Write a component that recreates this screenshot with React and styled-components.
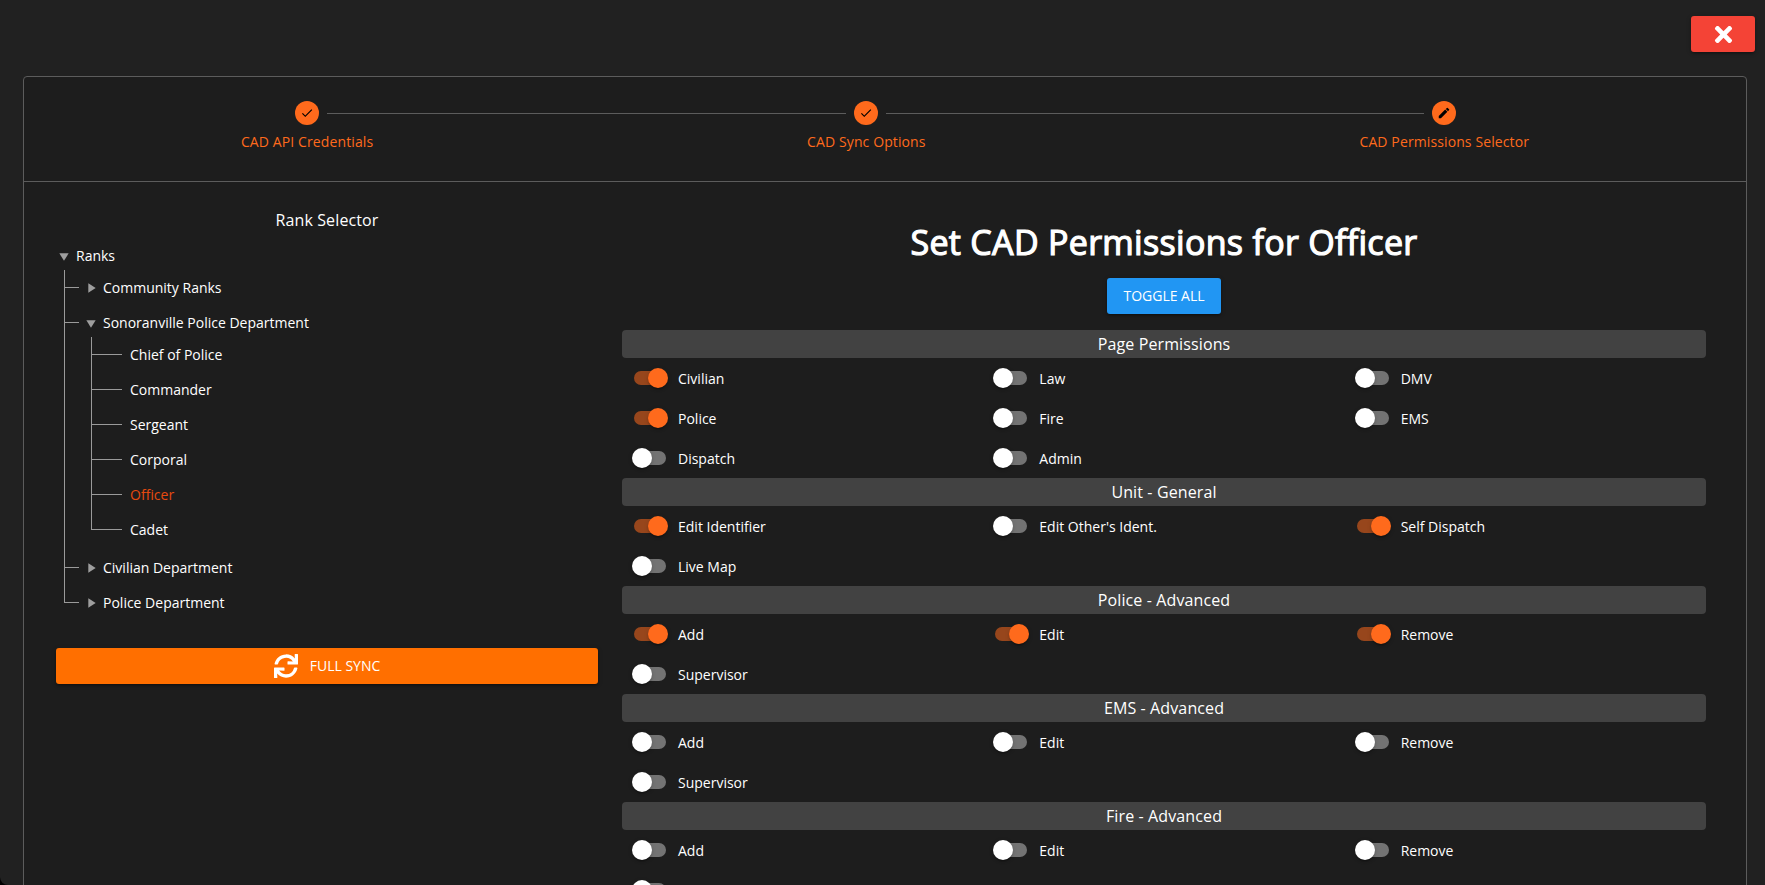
import React from 'react';
import styled, { createGlobalStyle, css } from 'styled-components';
import { MdCheck, MdEdit, MdPlayArrow } from 'react-icons/md';
import { FaTimes, FaSync } from 'react-icons/fa';

const GlobalStyle = createGlobalStyle`
  * { box-sizing: border-box; }
  html, body { margin: 0; height: 100%; overflow: hidden; background: #000; }
  body { color: #fff; font: 400 14px/19px "Open Sans", "Noto Sans", sans-serif; }
  button { font: inherit; }
`;

const Page = styled.div`
  display: flex;
  flex-direction: column;
  height: 885px;
  overflow: hidden;
  background: #212121;
  border-bottom-left-radius: 8px;
`;

const TopBar = styled.header`
  display: flex;
  justify-content: flex-end;
  flex: none;
  height: 76px;
  padding: 16px 10px 0 0;
`;

const Button = styled.button`
  display: flex;
  align-items: center;
  justify-content: center;
  gap: 12px;
  height: 36px;
  padding: 0 16px;
  border: 0;
  border-radius: 3px;
  color: #fff;
  background: ${(p) => p.$color};
  width: ${(p) => p.$width || 'auto'};
  white-space: nowrap;
  text-transform: uppercase;
  box-shadow: 0 1px 5px rgba(0, 0, 0, 0.2), 0 2px 2px rgba(0, 0, 0, 0.14), 0 3px 1px -2px rgba(0, 0, 0, 0.12);
`;

const Label = styled.span`
  padding-bottom: 1px;
`;

const Stepper = styled.main`
  flex: none;
  margin: 0 18px 0 23px;
  border: 1px solid #5c5c5c;
  border-radius: 4px;
  background: #1d1d1d;
  height: 900px;
`;

const Steps = styled.div`
  display: flex;
  height: 105px;
  border-bottom: 1px solid #5c5c5c;
`;

const Step = styled.div`
  flex: 1 1 auto;
  padding-top: 24px;
  color: #ff6a1c;
`;

const DotRow = styled.div`
  display: flex;
  align-items: flex-start;
  gap: 8px;
`;

const StepLine = styled.div`
  flex: 1;
  height: 1px;
  margin-top: 12px;
  background: ${(p) => (p.$hidden ? 'transparent' : '#5c5c5c')};
`;

const Dot = styled.div`
  display: flex;
  align-items: center;
  justify-content: center;
  width: 24px;
  height: 24px;
  border-radius: 50%;
  background: #ff6a1c;
  color: #000;
`;

const StepLabel = styled.div`
  padding: 7px 32px 0;
  text-align: center;
  letter-spacing: 0.11px;
  white-space: nowrap;
`;

const Content = styled.div`
  display: flex;
  gap: 24px;
  padding: 26px 40px 0 32px;
`;

const RankPanel = styled.section`
  width: 542px;
`;

const PanelTitle = styled.div`
  font-size: 16px;
  line-height: 24px;
  letter-spacing: 0.12px;
  text-align: center;
`;

const Tree = styled.div`
  padding: 6px 0 25px;
`;

const NodeBody = styled.div`
  padding-bottom: 3px;
`;

const NodeHeader = styled.div`
  display: flex;
  align-items: center;
  gap: 4px;
  height: 32px;
  padding-top: 4px;
  color: ${(p) => (p.$selected ? '#e64a0f' : '#fff')};
`;

const Arrow = styled(MdPlayArrow)`
  color: #9e9e9e;
  transform: ${(p) => (p.$open ? 'rotate(90deg)' : 'none')};
`;

const NodeChildren = styled.div`
  margin-left: 8px;
`;

const Branch = styled.div`
  display: flex;
  gap: ${(p) => (p.$leaf ? '8px' : '4px')};
`;

const Stem = styled.div`
  display: flex;
  flex-direction: column;
  width: ${(p) => (p.$leaf ? '31px' : '15px')};
`;

const Elbow = styled.div`
  height: 18px;
  border-left: 1px solid #9a9a9a;
  border-bottom: 1px solid #9a9a9a;
`;

const StemTail = styled.div`
  flex: 1;
  border-left: 1px solid #9a9a9a;
`;

const PermissionPanel = styled.section`
  display: flex;
  flex-direction: column;
  align-items: center;
  width: 1084px;
`;

const Title = styled.h2`
  margin: 13px 0 15px;
  font-size: 34px;
  line-height: 42px;
  font-weight: 400;
  letter-spacing: 0.3px;
  -webkit-text-stroke: 1.2px #fff;
  white-space: nowrap;
`;

const Group = styled.div`
  width: 100%;
  ${(p) => p.$first && css`margin-top: 16px;`}
`;

const GroupTitle = styled.div`
  height: 28px;
  border-radius: 4px;
  background: #424242;
  font-size: 16px;
  line-height: 28px;
  letter-spacing: 0.12px;
  text-align: center;
`;

const ToggleGrid = styled.div`
  display: grid;
  grid-template-columns: repeat(3, 1fr);
  grid-auto-rows: 40px;
`;

const Toggle = styled.label`
  display: flex;
  align-items: center;
`;

const Switch = styled.span`
  display: flex;
  align-items: center;
  width: 56px;
  padding-left: 12px;
`;

const Track = styled.span`
  display: flex;
  align-items: center;
  width: 32px;
  height: 14px;
  border-radius: 7px;
  background: ${(p) => (p.$on ? 'rgba(255, 106, 28, 0.54)' : 'rgba(255, 255, 255, 0.38)')};
`;

const Thumb = styled.span`
  flex: none;
  width: 20px;
  height: 20px;
  margin-left: ${(p) => (p.$on ? '14px' : '-2px')};
  border-radius: 50%;
  background: ${(p) => (p.$on ? '#ff6a1c' : '#fff')};
  box-shadow: 0 3px 1px -2px rgba(0, 0, 0, 0.2), 0 2px 2px rgba(0, 0, 0, 0.14), 0 1px 5px rgba(0, 0, 0, 0.12);
`;

const steps = [
  { label: 'CAD API Credentials', Icon: MdCheck },
  { label: 'CAD Sync Options', Icon: MdCheck },
  { label: 'CAD Permissions Selector', Icon: MdEdit },
];

const ranks = {
  label: 'Ranks',
  open: true,
  children: [
    { label: 'Community Ranks', children: [] },
    {
      label: 'Sonoranville Police Department',
      open: true,
      children: [
        { label: 'Chief of Police' },
        { label: 'Commander' },
        { label: 'Sergeant' },
        { label: 'Corporal' },
        { label: 'Officer', selected: true },
        { label: 'Cadet' },
      ],
    },
    { label: 'Civilian Department', children: [] },
    { label: 'Police Department', children: [] },
  ],
};

const groups = [
  {
    title: 'Page Permissions',
    items: [['Civilian', true], ['Law'], ['DMV'], ['Police', true], ['Fire'], ['EMS'], ['Dispatch'], ['Admin']],
  },
  {
    title: 'Unit - General',
    items: [['Edit Identifier', true], ["Edit Other's Ident."], ['Self Dispatch', true], ['Live Map']],
  },
  { title: 'Police - Advanced', items: [['Add', true], ['Edit', true], ['Remove', true], ['Supervisor']] },
  { title: 'EMS - Advanced', items: [['Add'], ['Edit'], ['Remove'], ['Supervisor']] },
  { title: 'Fire - Advanced', items: [['Add'], ['Edit'], ['Remove'], ['Supervisor']] },
];

function TreeNode({ node }) {
  return (
    <NodeBody>
      <NodeHeader $selected={node.selected}>
        {node.children && <Arrow size={16} $open={node.open} />}
        <Label>{node.label}</Label>
      </NodeHeader>
      {node.open && (
        <NodeChildren>
          {node.children.map((child, i) => (
            <Branch key={child.label} $leaf={!child.children}>
              <Stem $leaf={!child.children}>
                <Elbow />
                {i < node.children.length - 1 && <StemTail />}
              </Stem>
              <TreeNode node={child} />
            </Branch>
          ))}
        </NodeChildren>
      )}
    </NodeBody>
  );
}

export default function App() {
  return (
    <Page>
      <GlobalStyle />
      <TopBar>
        <Button $color="#f44336" $width="64px" aria-label="Close">
          <FaTimes size={25} />
        </Button>
      </TopBar>
      <Stepper>
        <Steps>
          {steps.map(({ label, Icon }, i) => (
            <Step key={label}>
              <DotRow>
                <StepLine $hidden={i === 0} />
                <Dot>
                  <Icon size={14} />
                </Dot>
                <StepLine $hidden={i === steps.length - 1} />
              </DotRow>
              <StepLabel>{label}</StepLabel>
            </Step>
          ))}
        </Steps>
        <Content>
          <RankPanel>
            <PanelTitle>Rank Selector</PanelTitle>
            <Tree>
              <TreeNode node={ranks} />
            </Tree>
            <Button $color="#ff6f00" $width="100%">
              <FaSync size={24} />
              <Label>Full Sync</Label>
            </Button>
          </RankPanel>
          <PermissionPanel>
            <Title>Set CAD Permissions for Officer</Title>
            <Button $color="#2196f3">
              <Label>Toggle All</Label>
            </Button>
            {groups.map((group, i) => (
              <Group key={group.title} $first={i === 0}>
                <GroupTitle>{group.title}</GroupTitle>
                <ToggleGrid>
                  {group.items.map(([label, on]) => (
                    <Toggle key={label}>
                      <Switch>
                        <Track $on={on}>
                          <Thumb $on={on} />
                        </Track>
                      </Switch>
                      {label}
                    </Toggle>
                  ))}
                </ToggleGrid>
              </Group>
            ))}
          </PermissionPanel>
        </Content>
      </Stepper>
    </Page>
  );
}
